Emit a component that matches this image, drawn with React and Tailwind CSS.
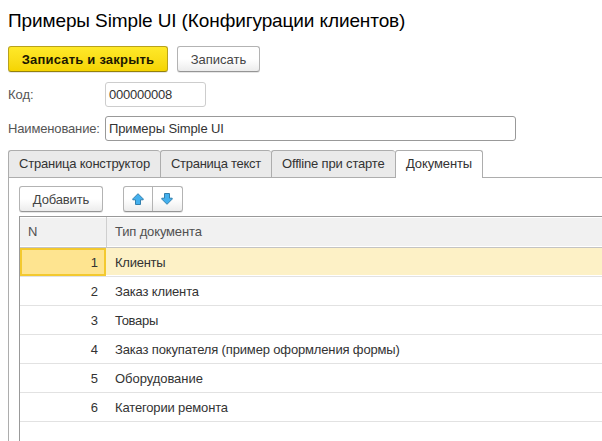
import React from "react";

const rows = [
  { name: "Клиенты", tracking: "tracking-[-0.25px]" },
  { name: "Заказ клиента", tracking: "tracking-[-0.15px]" },
  { name: "Товары", tracking: "tracking-[-0.3px]" },
  { name: "Заказ покупателя (пример оформления формы)", tracking: "tracking-[-0.15px]" },
  { name: "Оборудование", tracking: "tracking-[-0.05px]" },
  { name: "Категории ремонта", tracking: "tracking-[-0.15px]" },
];

const tabs = [
  { label: "Страница конструктор", style: "w-[152px] tracking-[-0.2px]" },
  { label: "Страница текст", style: "w-[111px] tracking-[-0.28px]" },
  { label: "Offline при старте", style: "w-[124px] tracking-[-0.17px]" },
];

const button =
  "flex h-[26px] items-center justify-center rounded-[3px] border border-[#b3b3b3] border-b-[#959595] bg-linear-to-b from-white from-50% to-[#ececec] text-[#444] shadow-[0_1px_0_#e6e6e6]";

function Arrow({ down }) {
  return (
    <svg width="12" height="12" viewBox="0 0 12 12" className={down ? "rotate-180" : ""}>
      <path
        d="M6 .7 11.2 5.9v.9H8.5v4.7H3.5V6.8H.8V5.9Z"
        fill="#43b0ee"
        stroke="#3280ae"
        strokeWidth="1"
        strokeLinejoin="round"
      />
    </svg>
  );
}

export default function App() {
  return (
    <div className="flex h-[441px] w-[602px] flex-col overflow-hidden bg-white font-['Liberation_Sans',Arial,sans-serif] text-[13px] leading-[16px] text-[#333]">
      <h1 className="h-[46px] pt-[9px] pl-2 text-[19px] leading-[24px] tracking-[-0.11px] whitespace-nowrap text-black">
        Примеры Simple UI (Конфигурации клиентов)
      </h1>

      <div className="flex h-9 gap-[9px] pl-2">
        <button className="flex h-[26px] w-40 items-center justify-center rounded-[3px] border border-[#b8a21c] border-b-[#94810c] bg-linear-to-b from-[#ffe928] to-[#f5d400] pt-[2px] font-bold tracking-[0.2px] whitespace-nowrap text-[#1c1800] shadow-[0_1px_0_#e6e6e6]">
          Записать и закрыть
        </button>
        <button className={`${button} w-[83px] pt-[2px]`}>Записать</button>
      </div>

      <div className="flex h-[34px] pl-2">
        <label className="w-[97px] pt-[5px] text-[#555]">Код:</label>
        <div className="h-[25px] w-[101px] rounded-[3px] border border-[#cdcdcd] px-[3px] pt-1 tracking-[-0.23px]">
          000000008
        </div>
      </div>
      <div className="flex h-[34px] pl-2">
        <label className="w-[97px] pt-[5px] tracking-[-0.15px] text-[#555]">Наименование:</label>
        <div className="h-[25px] w-[411px] rounded-[3px] border border-[#999] px-[3px] pt-1 tracking-[-0.1px]">
          Примеры Simple UI
        </div>
      </div>

      <div className="flex h-7 shrink-0 pl-2">
        {tabs.map((tab) => (
          <div
            key={tab.label}
            className={`${tab.style} rounded-t-[3px] border-t border-b border-l border-[#adadad] bg-[#eaeaea] pt-[5px] pl-[10px] whitespace-nowrap`}
          >
            {tab.label}
          </div>
        ))}
        <div className="w-[88px] rounded-t-[3px] border-x border-t border-[#adadad] pt-[5px] pl-[10px] tracking-[-0.1px]">
          Документы
        </div>
        <div className="flex-1 border-b border-[#adadad]" />
      </div>

      <div className="ml-2 flex flex-1 flex-col border-l border-[#adadad] pt-2 pl-[10px]">
        <div className="flex h-[30px] shrink-0 gap-5">
          <button className={`${button} w-[84px] pt-[2px] tracking-[-0.15px]`}>Добавить</button>
          <div className={`${button} w-[60px]`}>
            <div className="flex h-full w-[29px] items-center justify-center border-r border-[#b3b3b3]">
              <Arrow />
            </div>
            <div className="flex h-full w-[29px] items-center justify-center pr-[2px]">
              <Arrow down />
            </div>
          </div>
        </div>

        <div className="flex-1 border-t border-l border-[#999]">
          <div className="flex h-[31px] border-b border-[#c4c4c4] bg-[#f1f1f1] text-[#505050] shadow-[inset_0_1px_0_white,inset_0_-1px_0_white]">
            <div className="w-[87px] border-r border-[#cfcfcf] pt-[7px] pl-2">N</div>
            <div className="pt-[7px] pl-2 tracking-[-0.15px]">Тип документа</div>
          </div>
          {rows.map((row, i) => (
            <div
              key={row.name}
              className={`flex h-[29px] border-b border-[#e2e2e2] ${i === 0 ? "bg-[#fdf1c6] shadow-[inset_0_-1px_0_white]" : ""}`}
            >
              <div
                className={`w-[86px] border-2 pt-[5px] pr-[6px] text-right ${i === 0 ? "border-[#f3c92f] bg-[#fee490]" : "border-transparent"}`}
              >
                {i + 1}
              </div>
              <div className={`pt-[7px] pl-[9px] whitespace-nowrap ${row.tracking}`}>{row.name}</div>
            </div>
          ))}
        </div>
      </div>
    </div>
  );
}
